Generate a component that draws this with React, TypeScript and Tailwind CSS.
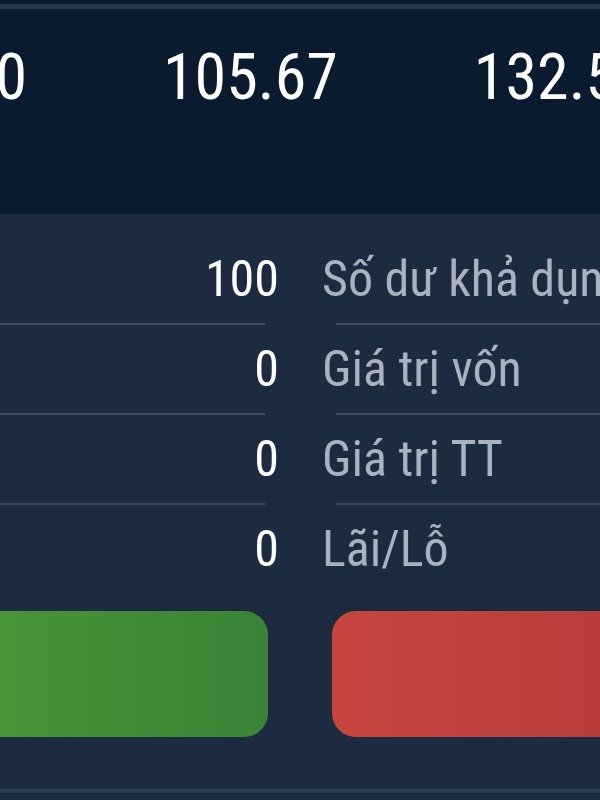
import React from "react";

// --- Dữ liệu hiển thị ---
const prices = ["98.70", "105.67", "132.50"];

interface Row {
  value: string;
  label: string;
}

const rows: Row[] = [
  { value: "100", label: "Số dư khả dụng" },
  { value: "0", label: "Giá trị vốn" },
  { value: "0", label: "Giá trị TT" },
  { value: "0", label: "Lãi/Lỗ" },
];

const fontStack = "font-['Roboto_Condensed','Liberation_Sans_Narrow',Roboto,sans-serif] font-stretch-condensed";

const Divider = () => (
  <div className="flex h-[2px]">
    <div className="w-[265px] bg-[#3a4a5f]" />
    <div className="ml-[71px] flex-1 bg-[#3a4a5f]" />
  </div>
);

const App = () => {
  return (
    <div className={`w-[600px] h-[800px] overflow-hidden bg-[#1c2b40] flex flex-col ${fontStack}`}>
      {/* Header giá */}
      <div className="h-[4px] bg-[#0b1a2d]" />
      <div className="h-[5px] bg-[#25384e]" />
      <div className="h-[205px] bg-[#0a1a2f] flex items-start pt-[37px] overflow-hidden">
        <div className="flex items-center gap-[136px] text-[64px] leading-none text-white whitespace-nowrap">
          <div className="w-[27px] flex justify-end shrink-0">
            <span>{prices[0]}</span>
          </div>
          <span className="shrink-0">{prices[1]}</span>
          <span className="shrink-0">{prices[2]}</span>
        </div>
      </div>

      {/* Thông tin tài khoản */}
      <div className="pt-[21px] flex flex-col">
        {rows.map((row, i) => (
          <div key={row.label}>
            <div className="h-[88px] flex items-center text-[50px] leading-none whitespace-nowrap">
              <span className="w-[279px] shrink-0 text-right text-white">{row.value}</span>
              <span className="ml-[43px] shrink-0 text-[#a9b3bf]">{row.label}</span>
            </div>
            {i < rows.length - 1 && <Divider />}
          </div>
        ))}
      </div>

      {/* Nút mua / bán */}
      <div className="mt-[18px] flex gap-[64px]">
        <button className="ml-[-40px] w-[308px] h-[126px] rounded-[24px] bg-gradient-to-r from-[#4b9739] to-[#3a8336] shrink-0" />
        <button className="w-[308px] h-[126px] rounded-[24px] bg-gradient-to-r from-[#c6453f] to-[#b83c3b] shrink-0" />
      </div>

      <div className="mt-[52px] h-[4px] bg-[#2a3c54]" />
    </div>
  );
};

export default App;
